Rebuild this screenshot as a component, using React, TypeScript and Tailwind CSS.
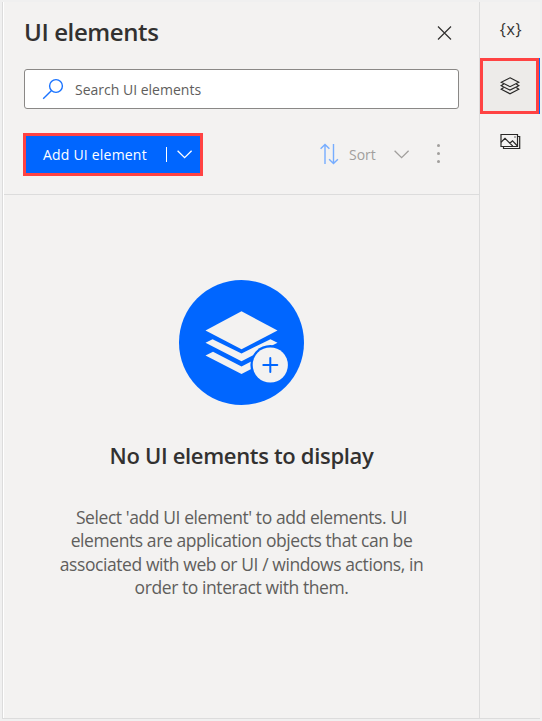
import React from "react";

function SearchIcon() {
  return (
    <svg width="22" height="22" viewBox="0 0 22 22" fill="none" stroke="#1a73ff" strokeWidth="1.4">
      <circle cx="14" cy="8" r="6.4" />
      <path d="M9.3 12.7 1.2 20.8" />
    </svg>
  );
}

function Chevron({ color }: { color: string }) {
  return (
    <svg width="16" height="10" viewBox="0 0 16 10" fill="none" stroke={color} strokeWidth="1.3">
      <path d="M.6 .7 7.6 7.7 14.6 .7" />
    </svg>
  );
}

function LayersIcon() {
  return (
    <svg width="20" height="18" viewBox="0 0 20 18" fill="none" stroke="#292827" strokeWidth="1.2">
      <path d="M10 .8 18.8 5.3 10 9.7 1.2 5.3Z" />
      <path d="M3.7 7 1.2 8.7 10 13.1 18.8 8.7 16.3 7" />
      <path d="M3.7 10.4 1.2 12.2 10 16.8 18.8 12.2 16.3 10.4" />
    </svg>
  );
}

function ImagesIcon() {
  return (
    <svg width="21" height="17" viewBox="0 0 21 17" fill="none" stroke="#292827" strokeWidth="1.2">
      <path d="M1 1.5H17.5V13.5H1Z" />
      <path d="M17.5 3.5H19.7V15.5H3.5V13.5" />
      <path d="M1 9.3 5 5.4 12.8 13.2M9.8 10.3 12.5 7.8 17.5 13M14.3 4h1.4" />
    </svg>
  );
}

function EmptyIcon() {
  return (
    <svg width="125" height="125" viewBox="0 0 125 125">
      <circle cx="62.5" cy="62.5" r="62.5" fill="#0066ff" />
      <g fill="#f3f2f1">
        <path d="M62.5 31.3 98.5 50.5 62.5 69.2 26.5 50.5Z" />
        <path d="M33.5 59.2 62.5 73.5 91.5 59.2 98.5 62.7 62.5 81.3 26.5 62.7Z" />
        <path d="M34 71.8 62.5 86.6 91 71.8 98.5 75.6 62.5 94 26.5 75.6Z" />
      </g>
      <circle cx="91.3" cy="85" r="19.9" fill="#0066ff" />
      <circle cx="91.3" cy="85" r="17.6" fill="#f3f2f1" />
      <path d="M91.3 78V92M84.3 85H98.3" stroke="#0066ff" strokeWidth="2" strokeLinecap="round" />
    </svg>
  );
}

export default function App() {
  return (
    <div className="flex h-[721px] w-[542px] bg-[#f0f0f0] pt-0.5 pl-0.5 font-['Open_Sans','Noto_Sans',sans-serif] whitespace-nowrap">
      <div className="flex h-[717px] w-[538px] border-b border-l border-[#dcdcdc] bg-[#f3f2f1]">
        <main className="flex w-[477px] flex-col border-r border-l border-l-white border-r-[#dcdcdc]">
          <section className="h-[193px] border-b border-[#dcdcdc] pr-5 pl-5">
            <header className="flex h-[67px] items-start justify-between pt-3.5 pr-[7px]">
              <h1 className="text-[24px] leading-[32px] font-semibold tracking-[-0.4px] text-[#323130]">UI elements</h1>
              <svg className="mt-[9px]" width="15" height="15" viewBox="0 0 15 15" fill="none" stroke="#323130" strokeWidth="1.2">
                <path d="M1 1.5 14 14.5M14 1.5 1 14.5" />
              </svg>
            </header>
            <div className="flex h-10 w-[435px] items-center rounded-[3px] border border-[#8a8886] bg-white pl-[17px]">
              <SearchIcon />
              <span className="ml-[11px] pt-0.5 text-sm text-[#605e5c]">Search UI elements</span>
            </div>
            <div className="mt-6 -ml-px flex items-center">
              <button className="flex h-[43px] w-[180px] items-center border-3 border-[#ff4343] bg-[#0066ff] pl-[17px] text-white">
                <span className="w-[123px] text-left text-sm tracking-[0.2px]">Add UI element</span>
                <span className="h-[15px] w-px bg-white" />
                <span className="ml-2.5"><Chevron color="#ffffff" /></span>
              </button>
              <div className="ml-[117px] flex items-center text-[#a19f9d]">
                <svg className="-mt-0.5" width="19" height="22" viewBox="0 0 19 22" fill="none" stroke="#76adff" strokeWidth="1.4">
                  <path d="M5 21V1.5M.6 5.8 5 1.4 9.4 5.8M13.5 1V20.5M9.1 16.2 13.5 20.6 17.9 16.2" />
                </svg>
                <span className="ml-2.5 w-[45px] text-sm">Sort</span>
                <Chevron color="#a19f9d" />
                <span className="-mt-0.5 ml-[27px] flex flex-col gap-[5px]">
                  <i className="size-[3px] rounded-full bg-[#a19f9d]" />
                  <i className="size-[3px] rounded-full bg-[#a19f9d]" />
                  <i className="size-[3px] rounded-full bg-[#a19f9d]" />
                </span>
              </div>
            </div>
          </section>
          <section className="flex flex-col items-center pt-[85px]">
            <EmptyIcon />
            <h2 className="mt-[34px] text-[22px] leading-[32px] font-semibold tracking-[-0.33px] text-[#323130]">No UI elements to display</h2>
            <div className="mt-[35px] flex flex-col items-center text-[17.5px] leading-[23.3px] tracking-[-0.42px] text-[#605e5c]">
              <span>Select 'add UI element' to add elements. UI</span>
              <span>elements are application objects that can be</span>
              <span>associated with web or UI / windows actions, in</span>
              <span>order to interact with them.</span>
            </div>
          </section>
        </main>
        <nav className="flex w-[60px] flex-col">
          <div className="flex h-14 items-center justify-center pb-0.5 pl-0.5 text-base tracking-[0.7px] text-[#323130]">{"{x}"}</div>
          <div className="flex h-14 w-[60px] border-r border-[#0066ff]">
            <div className="flex w-full items-center justify-center border-3 border-[#ff4343] bg-[#edebe9] pl-px">
              <LayersIcon />
            </div>
          </div>
          <div className="flex h-14 items-center justify-center pb-px"><ImagesIcon /></div>
        </nav>
      </div>
    </div>
  );
}
